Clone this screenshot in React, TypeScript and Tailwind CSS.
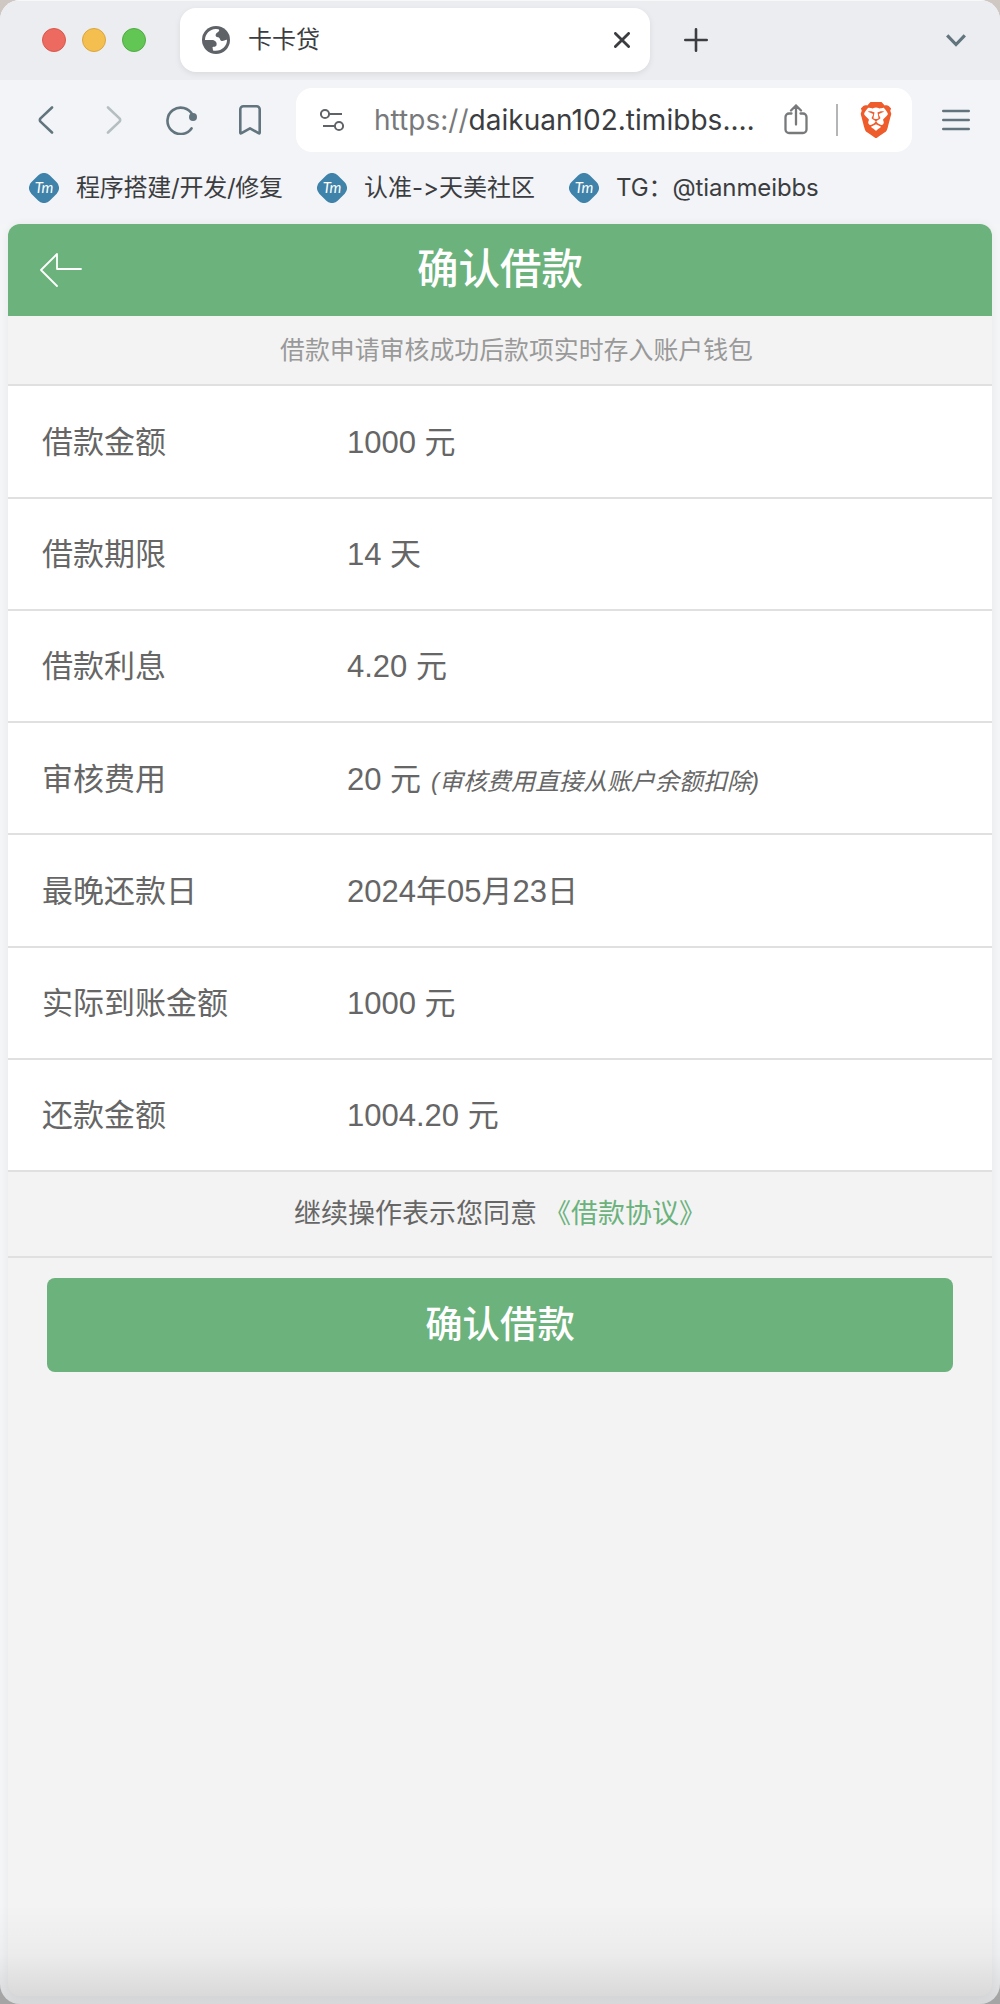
import React from 'react';
import { SiBrave } from 'react-icons/si';

const bookmarks = [
  { name: '程序搭建/开发/修复', width: 'w-[288px]', spacing: 'tracking-[-0.25px]' },
  { name: '认准->天美社区', width: 'w-[252px]', spacing: 'tracking-[0px]' },
  { name: 'TG：@tianmeibbs', width: 'w-[300px]', spacing: 'tracking-[-0.1px]' },
];

const details = [
  { label: '借款金额', value: '1000 元' },
  { label: '借款期限', value: '14 天' },
  { label: '借款利息', value: '4.20 元' },
  { label: '审核费用', value: '20 元', note: '(审核费用直接从账户余额扣除)' },
  { label: '最晚还款日', value: '2024年05月23日' },
  { label: '实际到账金额', value: '1000 元' },
  { label: '还款金额', value: '1004.20 元' },
];

const BookmarkLogo = () => (
  <svg width="30" height="30" viewBox="0 0 30 30" className="shrink-0">
    <rect x="2" y="2" width="26" height="26" rx="8" transform="rotate(45 15 15)" fill="#3f83ab" />
    <text x="15" y="20" textAnchor="middle" fontSize="15" fontStyle="italic" fontFamily="Lato, sans-serif" fill="#fff">
      Tm
    </text>
  </svg>
);

const TabBar = () => (
  <div className="flex h-20 items-center bg-[#ecedf1] shadow-[inset_0_1px_0_#f8f8f9]">
    <div className="ml-[42px] flex gap-4">
      <span className="size-6 rounded-full border border-[#d9584e] bg-[#ec6a5f]" />
      <span className="size-6 rounded-full border border-[#d9a63f] bg-[#f5bf50]" />
      <span className="size-6 rounded-full border border-[#50ab42] bg-[#62c654]" />
    </div>
    <div className="ml-[34px] flex h-16 w-[470px] items-center rounded-2xl bg-white pr-5 pl-[22px] shadow-[0_2px_6px_rgba(0,0,0,0.08)]">
      <svg width="28" height="28" viewBox="0 0 28 28">
        <circle cx="14" cy="14" r="14" fill="#5f6368" />
        <path
          d="M3 14C3 8 8 2.8 14 3Q17 3 17.3 4C17.2 6 14.5 6.5 13.8 8.2C13.2 10 14 11 16 11.2C18.5 11.5 17.5 14.6 19.8 15C21.6 15.3 23 13.6 25 13.8C25.2 20.5 19 26 11 24.6L10.5 21C14 21 14.8 20 14.6 17.6C14.2 14.6 11.5 14 9 14Z"
          fill="#fff"
        />
      </svg>
      <span className="ml-[18px] text-2xl text-[#3b3d41]">卡卡贷</span>
      <svg className="ml-auto" width="16" height="16" viewBox="0 0 16 16" stroke="#3b3d41" strokeWidth="2.8" strokeLinecap="round">
        <path d="M1.4 1.4 14.6 14.6M14.6 1.4 1.4 14.6" />
      </svg>
    </div>
    <svg className="ml-[34px]" width="24" height="24" viewBox="0 0 24 24" stroke="#3b3d41" strokeWidth="2.6" strokeLinecap="round">
      <path d="M12 1.3v21.4M1.3 12h21.4" />
    </svg>
    <svg className="mr-[34px] ml-auto" width="20" height="13" viewBox="0 0 20 13" fill="none" stroke="#62757e" strokeWidth="3.2">
      <path d="M1.2 1.3 10 10.5 18.8 1.3" />
    </svg>
  </div>
);

const Toolbar = () => (
  <div className="flex h-20 items-center bg-[#f3f4f7]">
    <svg className="ml-[38px]" width="16" height="28" viewBox="0 0 16 28" fill="none" stroke="#62757e" strokeWidth="2.6" strokeLinecap="round" strokeLinejoin="round">
      <path d="M14 1.5 2.5 12.4Q1.2 14 2.5 15.6L14 26.5" />
    </svg>
    <svg className="ml-[52px]" width="16" height="28" viewBox="0 0 16 28" fill="none" stroke="#b5bfc2" strokeWidth="2.6" strokeLinecap="round" strokeLinejoin="round">
      <path d="M2 1.5 13.5 12.4Q14.8 14 13.5 15.6L2 26.5" />
    </svg>
    <svg className="ml-[44px]" width="32" height="30" viewBox="0 0 32 30" fill="none">
      <path d="M25.5 23.4A13.2 13.2 0 1 1 26.5 10" stroke="#62757e" strokeWidth="2.6" strokeLinecap="round" />
      <circle cx="27" cy="12" r="4" fill="#62757e" />
    </svg>
    <svg className="ml-[40px]" width="24" height="30" viewBox="0 0 24 30" fill="none" stroke="#62757e" strokeWidth="2.6" strokeLinejoin="round">
      <path d="M2.3 4.3a3 3 0 0 1 3-3h13.4a3 3 0 0 1 3 3v23.2q0 1.3-1.2.7L12 23.3l-8.5 4.9q-1.2.6-1.2-.7Z" />
    </svg>
    <div className="ml-[34px] flex h-16 w-[616px] items-center rounded-2xl bg-white">
      <svg className="ml-6 shrink-0" width="25" height="24" viewBox="0 0 25 24" fill="none" stroke="#5f6368" strokeWidth="2">
        <circle cx="5" cy="6" r="4.1" />
        <path d="M9.1 6H22M3 18h11.5" />
        <circle cx="19" cy="18" r="4.1" />
      </svg>
      <span className="ml-[29px] w-[402px] text-[28px] leading-8 tracking-[0.03px] whitespace-nowrap text-[#3b3d41]">
        <span className="text-[#77797b]">https://</span>daikuan102.timibbs.…
      </span>
      <svg className="ml-[8px] shrink-0" width="24" height="32" viewBox="0 0 24 32" fill="none" stroke="#77797b" strokeWidth="2.3" strokeLinecap="round" strokeLinejoin="round">
        <path d="M7.5 9.5H5A3.5 3.5 0 0 0 1.5 13v12.5A3.5 3.5 0 0 0 5 29h14a3.5 3.5 0 0 0 3.5-3.5V13A3.5 3.5 0 0 0 19 9.5h-2.5M12 20.5V1.5M7 6.5l5-5 5 5" />
      </svg>
      <span className="ml-[28px] h-8 w-0.5 shrink-0 bg-[#b4b5b7]" />
      <SiBrave className="ml-[20px] shrink-0" size={36} color="#ee5c2b" />
    </div>
    <svg className="ml-[30px]" width="28" height="22" viewBox="0 0 28 22" stroke="#62757e" strokeWidth="2.4" strokeLinecap="round">
      <path d="M1.2 2h25.6M1.2 11h25.6M1.2 20h25.6" />
    </svg>
  </div>
);

const BookmarkBar = () => (
  <div className="flex h-16 items-center bg-[#f3f4f7] pb-2 pl-[29px]">
    {bookmarks.map((bookmark) => (
      <div key={bookmark.name} className={`flex items-center gap-[17px] ${bookmark.width}`}>
        <BookmarkLogo />
        <span className={`text-2xl whitespace-nowrap text-[#3b3d41] [font-feature-settings:'calt'_0] ${bookmark.spacing}`}>
          {bookmark.name}
        </span>
      </div>
    ))}
  </div>
);

const LoanPage = () => (
  <main className="mx-2 flex h-[1772px] flex-col overflow-hidden rounded-xl bg-[#f3f3f3] font-['Liberation_Sans','Noto_Sans_CJK_SC',sans-serif] text-[#666] shadow-[0_0_8px_rgba(0,0,0,0.06)]">
    <header className="flex h-[92px] shrink-0 items-center bg-[#6bb27c] text-white">
      <svg className="ml-[31px]" width="44" height="36" viewBox="0 0 44 36" fill="none" stroke="#fff" strokeWidth="1.8" strokeLinejoin="round" strokeLinecap="round">
        <path d="M42 17H18V2L2 18 18 34" />
      </svg>
      <h1 className="mr-[75px] flex-1 text-center text-[41.5px] leading-[60px] font-medium">确认借款</h1>
    </header>
    <p className="h-[70.4px] shrink-0 border-b-2 border-[#e0e0e0] pl-[33px] text-center text-[24.9px] leading-[69px] text-[#999]">
      借款申请审核成功后款项实时存入账户钱包
    </p>
    <dl className="bg-white text-[31px]">
      {details.map((item) => (
        <div key={item.label} className="flex h-[112.25px] items-center border-b-2 border-[#e0e0e0] pt-[3px] pl-[34px]">
          <dt className="w-[305px]">{item.label}</dt>
          <dd>
            {item.value}
            {item.note && <em className="ml-[10px] text-[24px]">{item.note}</em>}
          </dd>
        </div>
      ))}
    </dl>
    <p className="flex h-[85.8px] shrink-0 justify-center border-b-2 border-[#e0e0e0] text-[27px] leading-[85px]">
      继续操作表示您同意<a className="ml-[7px] text-[#6bb27c]">《借款协议》</a>
    </p>
    <button className="mx-[39px] mt-5 h-[94px] shrink-0 rounded-lg bg-[#6bb27c] text-[37.4px] font-medium text-white">
      确认借款
    </button>
  </main>
);

const App = () => {
  return (
    <div className="h-[2004px] w-[1000px] bg-linear-to-b from-[#cfc7c2] to-[#a5a5a5]">
      <div className="relative h-full overflow-hidden rounded-[20px] bg-[#f3f5f7] font-[Inter,'Noto_Sans_CJK_SC',sans-serif]">
        <TabBar />
        <Toolbar />
        <BookmarkBar />
        <LoanPage />
        {/* shade along the bottom edge of the window */}
        <div className="pointer-events-none absolute inset-x-0 bottom-0 h-[100px] bg-linear-to-b from-transparent via-black/[0.03] to-black/[0.12]" />
      </div>
    </div>
  );
};

export default App;
